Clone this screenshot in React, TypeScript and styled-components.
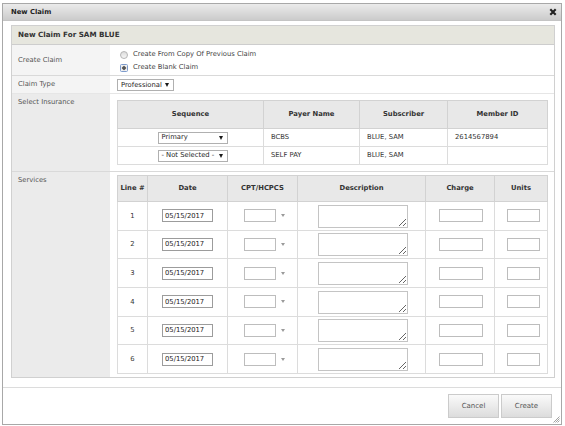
import React from "react";
import styled, { createGlobalStyle } from "styled-components";

const insurances = [
  { sequence: "Primary", payer: "BCBS", subscriber: "BLUE, SAM", memberId: "2614567894" },
  { sequence: "- Not Selected -", payer: "SELF PAY", subscriber: "BLUE, SAM", memberId: "" },
];

const serviceLines = [1, 2, 3, 4, 5, 6].map((line) => ({ line, date: "05/15/2017" }));

export default function App() {
  return (
    <>
      <GlobalStyle />
      <Dialog>
        <TitleBar>
          <DialogTitle>New Claim</DialogTitle>
          <CloseButton aria-label="close">
            <svg width="8" height="8" viewBox="0 0 8 8">
              <path d="M1.3 1.3 L6.7 6.7 M6.7 1.3 L1.3 6.7" stroke="#222" strokeWidth="2.1" />
            </svg>
          </CloseButton>
        </TitleBar>

        <DialogBody>
          <Panel>
            <PanelHeader>New Claim For SAM BLUE</PanelHeader>

            <FormRow>
              <FieldLabel $center $tone="#f4f4f4">Create Claim</FieldLabel>
              <FieldValue $pad="3px 7px 1px 10px">
                <RadioOption>
                  <Radio type="radio" name="create" />
                  Create From Copy Of Previous Claim
                </RadioOption>
                <RadioOption>
                  <Radio type="radio" name="create" defaultChecked />
                  Create Blank Claim
                </RadioOption>
              </FieldValue>
            </FormRow>

            <FormRow $line="#e6e6e6">
              <FieldLabel $center $tone="#f4f4f4">Claim Type</FieldLabel>
              <FieldValue $pad="3px 7px 2px">
                <FakeSelect $width={57}>
                  Professional <Caret />
                </FakeSelect>
              </FieldValue>
            </FormRow>

            <FormRow>
              <FieldLabel>Select Insurance</FieldLabel>
              <FieldValue $pad="6px 6px 6px 7px">
                <DataTable>
                  <colgroup>
                    <col width="146" />
                    <col width="96" />
                    <col width="88" />
                    <col width="100" />
                  </colgroup>
                  <thead>
                    <tr>
                      <HeaderCell $h={28}>Sequence</HeaderCell>
                      <HeaderCell $h={28}>Payer Name</HeaderCell>
                      <HeaderCell $h={28}>Subscriber</HeaderCell>
                      <HeaderCell $h={28}>Member ID</HeaderCell>
                    </tr>
                  </thead>
                  <tbody>
                    {insurances.map((ins) => (
                      <tr key={ins.sequence}>
                        <Cell $h={18} $align="center">
                          <FakeSelect $width={70} $shift={4}>
                            {ins.sequence} <Caret />
                          </FakeSelect>
                        </Cell>
                        <Cell $h={18}>{ins.payer}</Cell>
                        <Cell $h={18}>{ins.subscriber}</Cell>
                        <Cell $h={18}>{ins.memberId}</Cell>
                      </tr>
                    ))}
                  </tbody>
                </DataTable>
              </FieldValue>
            </FormRow>

            <FormRow>
              <FieldLabel>Services</FieldLabel>
              <FieldValue $pad="3px 6px 3px 7px">
                <DataTable>
                  <colgroup>
                    <col width="30" />
                    <col width="80" />
                    <col width="70" />
                    <col width="128" />
                    <col width="69" />
                    <col width="53" />
                  </colgroup>
                  <thead>
                    <tr>
                      <HeaderCell $h={26}>Line #</HeaderCell>
                      <HeaderCell $h={26}>Date</HeaderCell>
                      <HeaderCell $h={26}>CPT/HCPCS</HeaderCell>
                      <HeaderCell $h={26}>Description</HeaderCell>
                      <HeaderCell $h={26}>Charge</HeaderCell>
                      <HeaderCell $h={26}>Units</HeaderCell>
                    </tr>
                  </thead>
                  <tbody>
                    {serviceLines.map((s) => (
                      <tr key={s.line}>
                        <Cell $h={28.67} $align="center">{s.line}</Cell>
                        <Cell $h={28.67} $align="center">
                          <TextInput $width={51} defaultValue={s.date} />
                        </Cell>
                        <Cell $h={28.67} $align="center">
                          <Combo>
                            <TextInput $width={32} $light />
                            <Caret $muted />
                          </Combo>
                        </Cell>
                        <Cell $h={28.67} $align="center">
                          <NoteArea />
                        </Cell>
                        <Cell $h={28.67} $align="center">
                          <TextInput $width={44} $light $shift={2} />
                        </Cell>
                        <Cell $h={28.67} $align="center">
                          <TextInput $width={33} $light $shift={4} />
                        </Cell>
                      </tr>
                    ))}
                  </tbody>
                </DataTable>
              </FieldValue>
            </FormRow>
          </Panel>
        </DialogBody>

        <ButtonPane>
          <DialogButton>Cancel</DialogButton>
          <DialogButton>Create</DialogButton>
        </ButtonPane>

        <ResizeGrip width="7" height="7" viewBox="0 0 7 7">
          <path d="M6.5 0.5 L0.5 6.5 M6.5 2.5 L2.5 6.5 M6.5 4.5 L4.5 6.5" stroke="#8a8a8a" strokeWidth="0.8" />
        </ResizeGrip>
      </Dialog>
    </>
  );
}

const GlobalStyle = createGlobalStyle`
  html, body {
    margin: 0;
    padding: 0;
    background: #fff;
  }

  body {
    font-family: "DejaVu Sans", Verdana, sans-serif;
    font-size: 6.8px;
    line-height: 1.2;
    color: #333;
  }

  * {
    box-sizing: border-box;
  }
`;

const Dialog = styled.div`
  position: relative;
  margin: 3px 0 0 2px;
  width: 560px;
  height: 422px;
  border: 1px solid #a8a8a8;
  background: #fff;
  display: flex;
  flex-direction: column;
`;

const TitleBar = styled.div`
  height: 17px;
  flex-shrink: 0;
  display: flex;
  align-items: center;
  justify-content: space-between;
  padding: 0 4px 0 8px;
  background: linear-gradient(#ebebeb, #cbcbcb);
  border-bottom: 1px solid #c4c4c4;
`;

const DialogTitle = styled.span`
  font-weight: bold;
  color: #222;
`;

const CloseButton = styled.span`
  display: flex;
  width: 8px;
  height: 8px;
`;

const DialogBody = styled.div`
  flex: 1;
  padding: 4px 6px 7px 8px;
`;

const Panel = styled.div`
  border: 1px solid #d0d0d0;
`;

const PanelHeader = styled.div`
  height: 19px;
  display: flex;
  align-items: center;
  padding-left: 6px;
  background: #e6e6de;
  border-bottom: 1px solid #cdcdcd;
  font-size: 7.2px;
  font-weight: bold;
  color: #333;
`;

const FormRow = styled.div<{ $line?: string }>`
  display: grid;
  grid-template-columns: 98px 1fr;
  border-bottom: 1px solid ${(p) => p.$line ?? "#d9d9d9"};

  &:last-child {
    border-bottom: none;
  }
`;

const FieldLabel = styled.div<{ $center?: boolean; $tone?: string }>`
  display: flex;
  align-items: ${(p) => (p.$center ? "center" : "flex-start")};
  padding: 4px 6px;
  background: ${(p) => p.$tone ?? "#ebebeb"};
  color: #555;
`;

const FieldValue = styled.div<{ $pad: string }>`
  padding: ${(p) => p.$pad};
  background: #fff;
`;

const RadioOption = styled.label`
  display: flex;
  align-items: center;
  gap: 5px;
  height: 13px;
  color: #444;
`;

const Radio = styled.input`
  appearance: none;
  margin: 0;
  width: 8px;
  height: 8px;
  border-radius: 50%;
  border: 1px solid #b4b4b4;
  background: linear-gradient(#dcdcdc, #f6f6f6);

  &:checked {
    border-radius: 1.5px;
    border-color: #7d9bcc;
    background: radial-gradient(circle, #555 0 1.5px, #d8d8d8 2px, #f2f2f2 3px);
  }
`;

const FakeSelect = styled.span<{ $width: number; $shift?: number }>`
  display: inline-flex;
  align-items: center;
  justify-content: space-between;
  width: ${(p) => p.$width}px;
  height: 12px;
  margin-left: ${(p) => p.$shift ?? 0}px;
  padding: 0 4px 0 3px;
  border: 1px solid #b0b0b0;
  background: #fff;
  color: #1e1e1e;
  text-align: left;
  white-space: nowrap;
  vertical-align: middle;
`;

const Caret = styled.span<{ $muted?: boolean }>`
  flex-shrink: 0;
  width: 0;
  height: 0;
  border-left: 2.5px solid transparent;
  border-right: 2.5px solid transparent;
  border-top: ${(p) => (p.$muted ? "3px solid #9a9a9a" : "4px solid #1a1a1a")};
`;

const DataTable = styled.table`
  width: 430px;
  border-collapse: collapse;
  table-layout: fixed;
  border: 1px solid #d4d4d4;
`;

const HeaderCell = styled.th<{ $h: number }>`
  height: ${(p) => p.$h}px;
  padding: 0;
  background: #e8e8e8;
  border: 1px solid #d2d2d2;
  font-weight: bold;
  color: #333;
  text-align: center;
  vertical-align: middle;
`;

const Cell = styled.td<{ $h: number; $align?: string }>`
  height: ${(p) => p.$h}px;
  padding: 0 7px;
  border: 1px solid #dcdcdc;
  text-align: ${(p) => p.$align ?? "left"};
  vertical-align: middle;
  color: #333;
  white-space: nowrap;
`;

const TextInput = styled.input<{ $width: number; $light?: boolean; $shift?: number }>`
  width: ${(p) => p.$width}px;
  height: 13px;
  margin: 0 0 0 ${(p) => p.$shift ?? 0}px;
  padding: 0 2px;
  border: 1px solid ${(p) => (p.$light ? "#bdbdbd" : "#9c9c9c")};
  font: inherit;
  color: #222;
  vertical-align: middle;
  outline: none;
`;

const Combo = styled.span`
  display: inline-flex;
  align-items: center;
  gap: 5px;
  margin-left: 3px;
`;

const NoteArea = styled.textarea`
  display: inline-block;
  width: 90px;
  height: 23px;
  margin: 1px 0 0 2px;
  padding: 1px 2px;
  border: 1px solid #c4c4c4;
  font: inherit;
  vertical-align: middle;
  outline: none;
`;

const ButtonPane = styled.div`
  flex-shrink: 0;
  display: flex;
  justify-content: flex-end;
  gap: 2px;
  padding: 6px 9px 6px;
  border-top: 1px solid #dcdcdc;
`;

const DialogButton = styled.button`
  width: 51px;
  height: 24px;
  padding: 0;
  border: 1px solid #cbcbcb;
  background: linear-gradient(#fafafa, #dcdcdc);
  font-family: inherit;
  font-size: 7px;
  color: #555;
`;

const ResizeGrip = styled.svg`
  position: absolute;
  right: 1px;
  bottom: 1px;
`;
